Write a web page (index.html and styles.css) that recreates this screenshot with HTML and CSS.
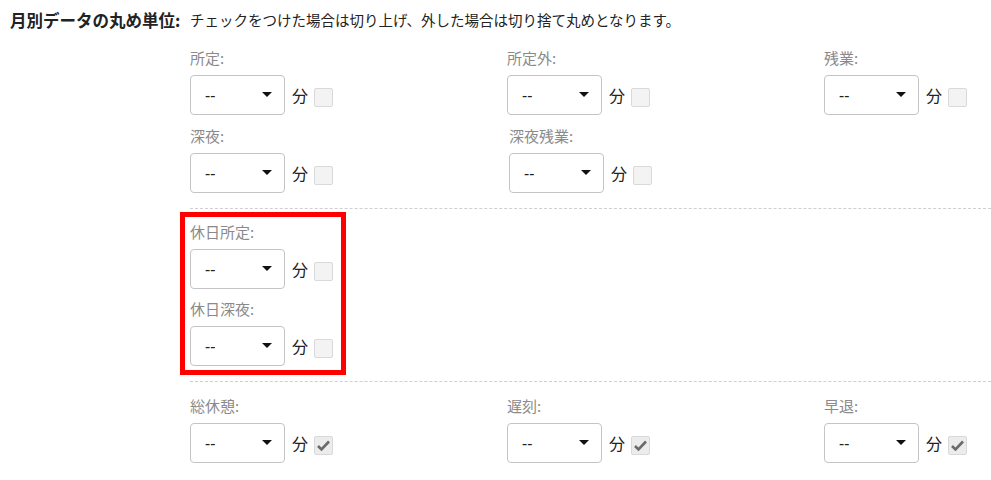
FILE: index.html
```html
<!DOCTYPE html>
<html lang="ja">
<head>
    <meta charset="UTF-8">
    <title>月別データの丸め単位</title>
    <link rel="stylesheet" href="styles.css">
</head>
<body>
    <div class="form-row">
        <div class="form-label">月別データの丸め単位:</div>
        <div class="form-body">
            <p class="form-note">チェックをつけた場合は切り上げ、外した場合は切り捨て丸めとなります。</p>

            <!-- 平日 -->
            <section class="block block-first">
                <div class="fields">
                    <div class="field">
                        <label>所定:</label>
                        <div class="control">
                            <div class="select"><span>--</span><i class="caret"></i></div>
                            <span class="unit">分</span>
                            <span class="check"></span>
                        </div>
                    </div>
                    <div class="field">
                        <label>所定外:</label>
                        <div class="control">
                            <div class="select"><span>--</span><i class="caret"></i></div>
                            <span class="unit">分</span>
                            <span class="check"></span>
                        </div>
                    </div>
                    <div class="field">
                        <label>残業:</label>
                        <div class="control">
                            <div class="select"><span>--</span><i class="caret"></i></div>
                            <span class="unit">分</span>
                            <span class="check"></span>
                        </div>
                    </div>
                    <div class="field">
                        <label>深夜:</label>
                        <div class="control">
                            <div class="select"><span>--</span><i class="caret"></i></div>
                            <span class="unit">分</span>
                            <span class="check"></span>
                        </div>
                    </div>
                    <div class="field field-nudge">
                        <label>深夜残業:</label>
                        <div class="control">
                            <div class="select"><span>--</span><i class="caret"></i></div>
                            <span class="unit">分</span>
                            <span class="check"></span>
                        </div>
                    </div>
                </div>
            </section>

            <!-- 休日 -->
            <section class="block block-holiday">
                <div class="highlight">
                    <div class="field">
                        <label>休日所定:</label>
                        <div class="control">
                            <div class="select"><span>--</span><i class="caret"></i></div>
                            <span class="unit">分</span>
                            <span class="check"></span>
                        </div>
                    </div>
                    <div class="field">
                        <label>休日深夜:</label>
                        <div class="control">
                            <div class="select"><span>--</span><i class="caret"></i></div>
                            <span class="unit">分</span>
                            <span class="check"></span>
                        </div>
                    </div>
                </div>
            </section>

            <!-- 休憩・遅刻・早退 -->
            <section class="block block-last">
                <div class="fields">
                    <div class="field">
                        <label>総休憩:</label>
                        <div class="control">
                            <div class="select"><span>--</span><i class="caret"></i></div>
                            <span class="unit">分</span>
                            <span class="check checked"><svg viewBox="0 0 19 19" width="19" height="19"><path d="M4 10l3.5 3.5L15 5.5" fill="none" stroke="#6b6b6b" stroke-width="2.6"/></svg></span>
                        </div>
                    </div>
                    <div class="field">
                        <label>遅刻:</label>
                        <div class="control">
                            <div class="select"><span>--</span><i class="caret"></i></div>
                            <span class="unit">分</span>
                            <span class="check checked"><svg viewBox="0 0 19 19" width="19" height="19"><path d="M4 10l3.5 3.5L15 5.5" fill="none" stroke="#6b6b6b" stroke-width="2.6"/></svg></span>
                        </div>
                    </div>
                    <div class="field">
                        <label>早退:</label>
                        <div class="control">
                            <div class="select"><span>--</span><i class="caret"></i></div>
                            <span class="unit">分</span>
                            <span class="check checked"><svg viewBox="0 0 19 19" width="19" height="19"><path d="M4 10l3.5 3.5L15 5.5" fill="none" stroke="#6b6b6b" stroke-width="2.6"/></svg></span>
                        </div>
                    </div>
                </div>
            </section>
        </div>
    </div>
</body>
</html>
```

FILE: styles.css
```css
/* General */
body {
    margin: 0;
    padding: 10px 0 0 10px;
    background: #ffffff;
    color: #222;
    font-family: "Noto Sans CJK JP", "Noto Sans", sans-serif;
    overflow: hidden;
}

/* Row: label + body */
.form-row {
    display: flex;
}

.form-label {
    width: 180px;
    flex-shrink: 0;
    font-size: 16.5px;
    font-weight: bold;
    line-height: 20px;
}

.form-body {
    flex: 1;
}

.form-note {
    margin: 0;
    font-size: 14.5px;
    line-height: 20px;
}

/* Blocks separated by dashed lines */
.block {
    border-bottom: 1px dashed #cfcfcf;
}

.block-first {
    padding: 18px 0 15px;
}

.block-holiday {
    padding: 3px 0 6px;
}

.block-last {
    padding: 14px 0 20px;
    border-bottom: none;
}

.fields {
    display: grid;
    grid-template-columns: 317px 317px 1fr;
    row-gap: 11px;
}

.highlight {
    display: inline-flex;
    flex-direction: column;
    gap: 10px;
    margin-left: -10px;
    padding: 5px 8px 4px 5px;
    border: 5px solid #ff0000;
}

/* Field */
.field label {
    display: block;
    height: 20px;
    margin-bottom: 7px;
    font-size: 15px;
    line-height: 20px;
    color: #8a8a8a;
}

.field-nudge {
    margin-left: 2px;
}

.control {
    display: flex;
    align-items: center;
}

.select {
    display: flex;
    align-items: center;
    justify-content: space-between;
    box-sizing: border-box;
    width: 95px;
    height: 40px;
    padding: 0 12px 0 14px;
    border: 1px solid #c4c4c4;
    border-radius: 4px;
    background: #fff;
    font-family: "Noto Sans", sans-serif;
    font-size: 16px;
}

.caret {
    width: 0;
    height: 0;
    margin-top: -1px;
    border-left: 5px solid transparent;
    border-right: 5px solid transparent;
    border-top: 5px solid #111;
}

.unit {
    margin-left: 7px;
    font-size: 16px;
    line-height: 20px;
}

.check {
    box-sizing: border-box;
    width: 19px;
    height: 19px;
    margin: 4px 0 0 6px;
    border: 1px solid #d9d9d9;
    border-radius: 2px;
    background: #f3f3f3;
}

.check svg {
    display: block;
    margin: -1px;
}

.check.checked {
    background: #ececec;
}
```
